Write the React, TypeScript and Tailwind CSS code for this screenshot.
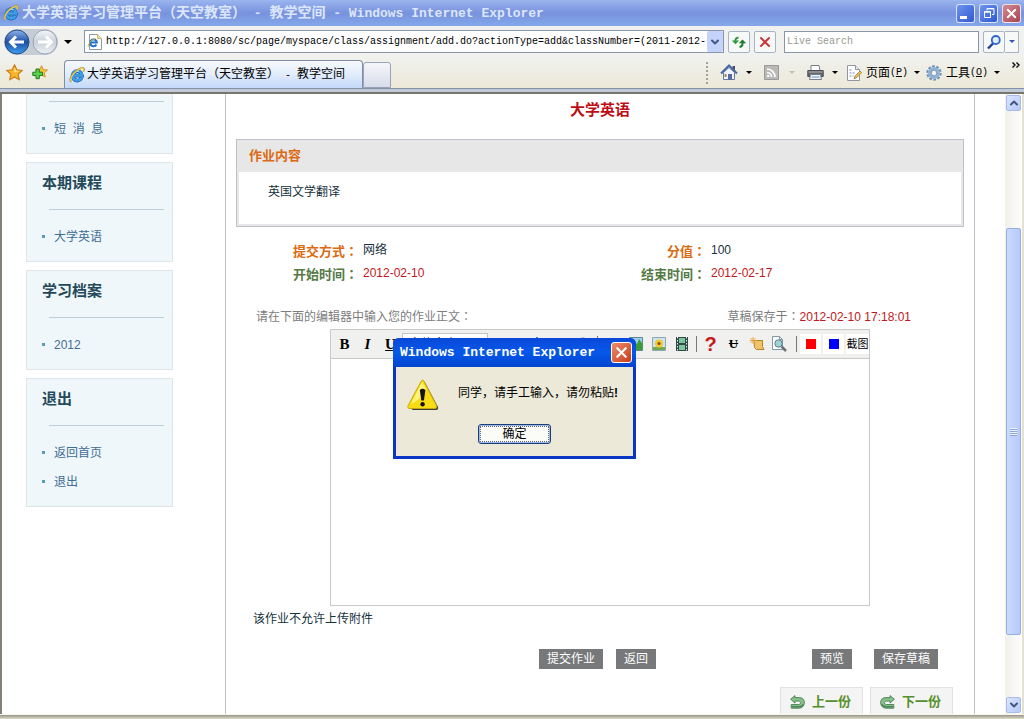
import type { ReactNode } from "react";
import { ChevronDown, ChevronUp, X } from "lucide-react";

const menus = [
  { title: "本期课程", items: ["大学英语"] },
  { title: "学习档案", items: ["2012"] },
  { title: "退出", items: ["返回首页", "退出"] },
];

const fields = [
  { label: "提交方式", value: "网络", tone: "text-[#dc6a12]", valueTone: "text-[#16323c]" },
  { label: "分值", value: "100", tone: "text-[#dc6a12]", valueTone: "text-[#16323c]" },
  { label: "开始时间", value: "2012-02-10", tone: "text-[#557a45]", valueTone: "text-[#c01820]" },
  { label: "结束时间", value: "2012-02-17", tone: "text-[#557a45]", valueTone: "text-[#c01820]" },
];

function IeLogo({ className = "size-4" }: { className?: string }) {
  return (
    <svg viewBox="0 0 16 16" className={`shrink-0 ${className}`} fill="none" aria-hidden="true">
      <path d="M12.6 10.8A4.7 4.7 0 1 1 13 8.600H4.600" stroke="#1b62b4" strokeWidth="3.800" />
      <path d="M12.4 10.8A4.7 4.7 0 1 1 12.900 8.500H4.600" stroke="#3f9fe6" strokeWidth="2.600" />
      <path d="M5 5.600a4.200 4.200 0 0 1 5-1" stroke="#a8dcff" strokeWidth="1" />
      <path d="M2.400 14.800C-.4 13.600 2.200 8 6.600 4.300 10.600 1 14.800-.2 15 2.200c.1.800-.2 1.600-.7 2.400" stroke="#a8903a" strokeWidth="1.600" />
      <path d="M2.600 14.400C.3 13 2.800 8 7 4.400 10.800 1.300 14.400.4 14.500 2.400c0 .6-.2 1.300-.6 2" stroke="#f4cf55" strokeWidth="1.100" />
    </svg>
  );
}

function Caret({ tone = "border-t-black" }: { tone?: string }) {
  return <span className={`size-0 border-x-[3px] border-t-[3px] border-x-transparent ${tone}`} />;
}

// The TC face centres the full-width colon in its cell.
function Colon() {
  return <span className="font-['Noto_Sans_CJK_TC',sans-serif]">：</span>;
}

function NavArrow({ forward = false }: { forward?: boolean }) {
  return (
    <svg viewBox="0 0 26 26" className="size-[26px]" fill="none" aria-hidden="true">
      <defs>
        <linearGradient id={forward ? "fwd" : "back"} x1="0" y1="0" x2="0" y2="1">
          <stop offset="0" stopColor={forward ? "#f4f6f9" : "#8fb4e8"} />
          <stop offset=".5" stopColor={forward ? "#c9d0d9" : "#1d4fa8"} />
          <stop offset="1" stopColor={forward ? "#eef2f5" : "#3fa0ee"} />
        </linearGradient>
      </defs>
      <circle cx="13" cy="13" r="12" fill={`url(#${forward ? "fwd" : "back"})`} stroke={forward ? "#98a4b4" : "#284a80"} />
      <path
        d={forward ? "M6 13h13M14 7.500l5.500 5.500-5.500 5.500" : "M20 13H7M12 7.500L6.500 13l5.500 5.500"}
        stroke="#fff"
        strokeWidth="3"
      />
    </svg>
  );
}

const star = "M8 .8l2.200 4.700 5.100.6-3.800 3.500 1 5.100L8 12.200l-4.500 2.500 1-5.100L.7 6.100l5.100-.6z";

function TitleBar() {
  const box = "flex size-[19px] items-center justify-center rounded-[3px] border border-white/80 text-white";
  return (
    <header className="flex h-[26px] shrink-0 items-center bg-linear-to-b from-[#9ab5ee] via-[#7892de] to-[#84a8ea] pl-[3px] pr-[3px]">
      <IeLogo />
      <h1 className="ml-[3px] flex-1 whitespace-pre font-['Liberation_Mono','Noto_Sans_CJK_SC',monospace] text-[13px] font-bold leading-5 text-[#dce6fb]">
        <span className="text-sm">大学英语学习管理平台（天空教室）</span>
        {" - "}
        <span className="text-sm">教学空间</span>
        {" - Windows Internet Explorer"}
      </h1>
      <div className="flex gap-1">
        <button aria-label="最小化" className={`${box} bg-linear-to-br from-[#6f95ee] to-[#2f57d0]`}>
          <span className="mr-1 mt-2 h-[3px] w-[7px] bg-white" />
        </button>
        <button aria-label="还原" className={`${box} bg-linear-to-br from-[#6f95ee] to-[#2f57d0]`}>
          <svg viewBox="0 0 12 12" className="size-3" fill="none" stroke="#fff" aria-hidden="true">
            <path d="M4 3.500V1.500h7v6H9M4 1.900h7" />
            <path d="M1.500 4.500h6v6h-6zM1.500 5.200h6" />
          </svg>
        </button>
        <button aria-label="关闭" className={`${box} bg-linear-to-br from-[#d08a94] to-[#a84450]`}>
          <X className="size-[15px] shrink-0" strokeWidth={3} />
        </button>
      </div>
    </header>
  );
}

function AddressBar() {
  const small = "flex h-[22px] w-[22px] shrink-0 items-center justify-center rounded-[2px] border border-[#a6b4c4] bg-[#f7f8f8]";
  return (
    <div className="flex h-[31px] shrink-0 items-center bg-[#f1f2f0] pl-1 pr-[5px]">
      <div className="flex items-center gap-0.5 rounded-full bg-[#c6ccd4]">
        <button aria-label="后退">
          <NavArrow />
        </button>
        <button aria-label="前进">
          <NavArrow forward />
        </button>
      </div>
      <button aria-label="历史记录" className="ml-1 flex w-3 justify-center">
        <span className="size-0 border-x-4 border-t-4 border-x-transparent border-t-black" />
      </button>
      <div className="ml-2.5 flex h-[23px] flex-1 items-center border border-[#8796a8] bg-white pl-0.5">
        <svg viewBox="0 0 16 16" className="size-4 shrink-0" fill="none" aria-hidden="true">
          <path d="M2.500.5h8l4 4v11h-12z" fill="#fff" stroke="#8d99a3" />
          <path d="M10.500.5v4h4" fill="#f3e7a8" stroke="#c9b860" />
          <path d="M9.400 10.600a3.400 3.400 0 1 1 .5-2.100H4" stroke="#2273c4" strokeWidth="2" />
          <path d="M1.500 13C0 11.500 4 5.500 8.500 4.500" stroke="#e0b040" />
        </svg>
        <input
          aria-label="地址"
          className="ml-[3px] min-w-0 flex-1 font-['Liberation_Mono',monospace] text-[10px] text-black outline-none"
          defaultValue="http://127.0.0.1:8080/sc/page/myspace/class/assignment/add.do?actionType=add&classNumber=(2011-2012-"
        />
        <button aria-label="展开地址" className="flex h-[21px] w-4 items-center justify-center rounded-[2px] bg-[#c3d3fa] text-[#41588c]">
          <ChevronDown className="size-3" strokeWidth={4} />
        </button>
      </div>
      <button aria-label="刷新" className={`${small} ml-1`}>
        <svg viewBox="0 0 16 16" className="size-4 shrink-0" fill="none" aria-hidden="true">
          <path d="M4.500 7.500V6q0-2 3-2.500" stroke="#2f9a3c" strokeWidth="2" />
          <path d="M.8 6.500h7.400L4.500 10.200z" fill="#2f9a3c" />
          <path d="M11.500 8.500V10q0 2.500-3 3" stroke="#1f7d2e" strokeWidth="2" />
          <path d="M7.800 9.200h7.400L11.500 5.500z" fill="#1f7d2e" />
        </svg>
      </button>
      <button aria-label="停止" className={`${small} ml-1 text-[#c8383c]`}>
        <X className="size-4 shrink-0" strokeWidth={3} />
      </button>
      <input
        aria-label="搜索"
        placeholder="Live Search"
        className="ml-2 h-[22px] w-[195px] border border-[#8796a8] bg-white px-0.5 font-['Liberation_Mono',monospace] text-[10px] outline-none placeholder:text-[#9a9a94]"
      />
      <button aria-label="开始搜索" className={`${small} ml-1`}>
        <svg viewBox="0 0 16 16" className="size-4" fill="none" aria-hidden="true">
          <path d="M7 9.500L2 14.500" stroke="#1c3f9c" strokeWidth="2.400" />
          <circle cx="9.800" cy="6" r="4" fill="#e2eefc" stroke="#3066c8" strokeWidth="1.800" />
        </svg>
      </button>
      <button aria-label="搜索选项" className="flex h-[22px] w-3.5 items-center justify-center border border-l-0 border-[#a6b4c4] bg-[#f7f8f8]">
        <Caret tone="border-t-[#2d5aa8]" />
      </button>
    </div>
  );
}

function CommandBar() {
  return (
    <nav className="flex h-[31px] shrink-0 items-end bg-linear-to-b from-[#f1f1ed] to-[#ece9d8] pl-1.5">
      <div className="flex h-[31px] w-[58px] items-center gap-[9px]">
        <button aria-label="收藏中心">
          <svg viewBox="0 0 16 16" className="size-[17px]" aria-hidden="true">
            <path d={star} fill="#fbb52a" stroke="#c97a12" />
            <path d="M8 2.500L9.400 6l3.400.5L8 8z" fill="#ffe59a" />
          </svg>
        </button>
        <button aria-label="添加到收藏夹">
          <svg viewBox="0 0 16 16" className="size-4" aria-hidden="true">
            <path d={star} fill="#f7c23c" stroke="#c98a22" transform="translate(3 0) scale(.82)" />
            <path d="M4 4h3.300v3.200h3.200v3.300H7.300v3.200H4v-3.200H.8V7.200H4z" fill="#5ad14a" stroke="#1d7c20" />
          </svg>
        </button>
      </div>
      <button className="flex h-7 w-[299px] items-center rounded-t-[4px] border border-b-0 border-[#7d8ea6] bg-linear-to-b from-[#f7fafd] via-[#e2ecfb] to-[#c3d9fa] pl-1 font-['Liberation_Mono','Noto_Sans_CJK_SC',monospace] text-xs text-black">
        <IeLogo />
        <span className="ml-0.5 whitespace-pre">
          大学英语学习管理平台（天空教室）<span className="text-[10px]"> - </span>教学空间
        </span>
      </button>
      <button aria-label="新选项卡" className="h-[26px] w-7 rounded-t-[3px] border border-[#98a3b8] bg-linear-to-b from-[#f5f6fa] to-[#d8dcea]" />
      <div className="ml-auto flex h-[31px] items-center pr-1">
        <span className="h-[22px] border-l-2 border-dotted border-[#a5a294]" />
        <button aria-label="主页" className="ml-3 flex items-center gap-2">
          <svg viewBox="0 0 18 18" className="size-[18px]" aria-hidden="true">
            <path d="M12.500 2h2.500v4h-2.500z" fill="#4a4f66" />
            <path d="M3.500 8.500L9 3.500l5.500 5v7h-11z" fill="#f1f4fa" stroke="#69779c" />
            <path d="M1 9.500L9 1.500l8 8" fill="none" stroke="#4867a8" strokeWidth="2" />
            <path d="M8 10h4v6H8z" fill="#536ca8" />
            <path d="M4.500 10h2v3h-2z" fill="#a8845c" />
          </svg>
          <Caret />
        </button>
        <button aria-label="源" className="ml-3 flex items-center gap-2.5">
          <svg viewBox="0 0 15 15" className="size-[15px]" fill="none" aria-hidden="true">
            <path d="M.5.5h14v14H.5z" fill="#b9b9b5" stroke="#9a9a96" />
            <path d="M3 7.500A4.500 4.500 0 0 1 7.500 12M3 4a8 8 0 0 1 8 8" stroke="#fff" strokeWidth="1.600" />
            <circle cx="4.200" cy="11" r="1.200" fill="#fff" />
          </svg>
          <Caret tone="border-t-[#c4c1b3]" />
        </button>
        <button aria-label="打印" className="ml-3 flex items-center gap-2">
          <svg viewBox="0 0 17 17" className="size-[17px]" aria-hidden="true">
            <path d="M4 1.500h8l1 5H4z" fill="#fff" stroke="#7c7f84" />
            <path d="M.8 6.500h15.400v6H.8z" fill="#62666c" stroke="#484b50" />
            <path d="M1.500 8h14" stroke="#b2b6ba" />
            <path d="M3.500 10.500h10l1 5h-12z" fill="#edf3fb" stroke="#7c7f84" />
            <path d="M4.500 13h8" stroke="#6d92cf" />
          </svg>
          <Caret />
        </button>
        <button className="ml-2 flex items-center text-xs text-black">
          <svg viewBox="0 0 16 16" className="mr-1 size-4" aria-hidden="true">
            <path d="M1.500.5h8l4 4v11h-12z" fill="#fff" stroke="#8f98a2" />
            <path d="M9.500.5v4h4" fill="#e8edf2" stroke="#8f98a2" />
            <path d="M3.500 5h3M3.500 8h5M3.500 11h4" stroke="#7188c8" strokeDasharray="2 1" />
            <path d="M8 14l1-3 5-5 1.700 1.700-5 5z" fill="#e9bf5a" stroke="#8c6f2c" strokeWidth=".7" />
          </svg>
          页面
          <span className="mr-1.5 font-['Liberation_Mono',monospace] text-[10px]">
            (<u>P</u>)
          </span>
          <Caret />
        </button>
        <button className="ml-1.5 flex items-center text-xs text-black">
          <svg viewBox="0 0 16 16" className="mr-1 size-4" fill="none" aria-hidden="true">
            <circle cx="8" cy="8" r="6.600" stroke="#6f8fb4" strokeWidth="2.200" strokeDasharray="2.600 1.550" />
            <circle cx="8" cy="8" r="4.400" fill="#f2f3ee" stroke="#8fb2d8" strokeWidth="3" />
            <circle cx="8" cy="8" r="2.800" stroke="#64809e" strokeWidth=".7" />
          </svg>
          工具
          <span className="mr-1.5 font-['Liberation_Mono',monospace] text-[10px]">
            (<u>O</u>)
          </span>
          <Caret />
        </button>
        <button aria-label="更多命令" className="mb-4 ml-3">
          <svg viewBox="0 0 8 6" className="h-1.5 w-2" fill="none" stroke="#000" strokeWidth="1.300" aria-hidden="true">
            <path d="M.5.500L3 3 .5 5.500M4.500.500L7 3 4.500 5.500" />
          </svg>
        </button>
      </div>
    </nav>
  );
}

function MenuItems({ items }: { items: string[] }) {
  return (
    <>
      <hr className="ml-[22px] mr-2 border-[#bccddc]" />
      <ul className="pb-2.5 pl-[15px] pt-3">
        {items.map((item) => (
          <li key={item} className="flex h-[29px] items-center gap-[9px]">
            <span className="size-[3px] bg-[#569fb4]" />
            <a href="#" className="whitespace-pre text-xs text-[#3f6d94]">
              {item}
            </a>
          </li>
        ))}
      </ul>
    </>
  );
}

function Sidebar() {
  const card = "border border-[#dde5e9] bg-[#eff7fb]";
  return (
    <aside className="ml-6 flex w-[147px] shrink-0 flex-col gap-2">
      <section className={`${card} border-t-0 pt-[7px]`}>
        <MenuItems items={["短  消  息"]} />
      </section>
      {menus.map((menu) => (
        <section key={menu.title} className={card}>
          <h2 className="mb-1.5 flex h-10 items-center pl-[15px] text-[15px] font-bold text-[#24495a]">{menu.title}</h2>
          <MenuItems items={menu.items} />
        </section>
      ))}
    </aside>
  );
}

function Tool({ label, children, className = "text-sm" }: { label: string; children?: ReactNode; className?: string }) {
  return (
    <button aria-label={label} className={`flex w-[23px] shrink-0 items-center justify-center font-bold ${className}`}>
      {children}
    </button>
  );
}

function EditorToolbar() {
  const letter = "h-6 font-['Liberation_Serif',serif] text-[15px] text-black";
  const swatch = "h-5 border-r-2 border-[#f0f0ee] bg-white";
  return (
    <div className="flex h-[29px] items-center overflow-hidden border-b border-[#c9c9c9] bg-[#f0f0ee] pl-0.5">
      <Tool label="粗体" className={letter}>B</Tool>
      <Tool label="斜体" className={`${letter} italic`}>I</Tool>
      <Tool label="下划线" className={`${letter} underline`}>U</Tool>
      <select aria-label="字体大小" className="h-[22px] w-[86px] border border-[#c4c4c4] bg-white px-0.5 text-xs text-black">
        <option>字体大小</option>
      </select>
      <div className="ml-auto flex items-center">
        <Tool label="文字颜色">
          <svg viewBox="0 0 14 14" className="size-3.5" fill="none" aria-hidden="true">
            <path d="M2 11L7 1l5 10M4 8h6" stroke="#2f6fd0" strokeWidth="2" />
          </svg>
        </Tool>
        <Tool label="背景颜色">
          <svg viewBox="0 0 14 14" className="size-3.5" aria-hidden="true">
            <path d="M7 1l5 5-5 5-5-5z" fill="#8fb2e8" stroke="#2f5fb0" />
          </svg>
        </Tool>
        <Tool label="超链接">
          <svg viewBox="0 0 14 14" className="size-3.5" fill="none" aria-hidden="true">
            <circle cx="7" cy="7" r="5.500" stroke="#4a7fd0" strokeWidth="2" />
          </svg>
        </Tool>
        <span className="mx-[3px] h-4 w-px bg-[#777]" />
        <Tool label="附件">
          <svg viewBox="0 0 14 14" className="size-3.5" aria-hidden="true">
            <path d="M7 1l5 5H2z" fill="#555" />
          </svg>
        </Tool>
        <Tool label="插入图片">
          <svg viewBox="0 0 14 14" className="size-3.5" aria-hidden="true">
            <path d="M.5.5h13v13H.5z" fill="#9ed0ee" stroke="#5c8a90" />
            <path d="M1 8l4-4 3 3 2-5 3.500 5v6H1z" fill="#3f9a3a" />
          </svg>
        </Tool>
        <Tool label="插入动画">
          <svg viewBox="0 0 14 14" className="size-3.5" aria-hidden="true">
            <path d="M.5.5h13v13H.5z" fill="#cde4ee" stroke="#8ba9b4" />
            <path d="M1 10h12v3H1z" fill="#79a84c" />
            <circle cx="7" cy="6.500" r="4" fill="#f3c934" />
            <circle cx="7" cy="6.500" r="1.600" fill="#8a5418" />
          </svg>
        </Tool>
        <Tool label="插入视频">
          <svg viewBox="0 0 14 16" className="h-4 w-3.5" aria-hidden="true">
            <path d="M1 1h12v14H1z" fill="#2f4a46" />
            <path d="M4 2h6v5H4zM4 9h6v5H4z" fill="#7fc4a0" />
            <path d="M2.500 1v14M11.500 1v14" stroke="#dce8e4" strokeDasharray="1.500 1.500" />
          </svg>
        </Tool>
        <span className="ml-[3px] mr-0.5 h-4 w-px bg-[#777]" />
        <Tool label="帮助" className="h-6 font-['Liberation_Sans',sans-serif] text-xl text-[#c41c1c]">?</Tool>
        <Tool label="删除线" className="h-6 font-['Liberation_Serif',serif] text-[13px] text-black line-through">U</Tool>
        <Tool label="清除格式">
          <svg viewBox="0 0 16 14" className="h-3.5 w-4" aria-hidden="true">
            <path d="M5 3.500h8.500v6l1.500 3H7.500l-2-2z" fill="#f0c466" stroke="#b5822c" />
            <path d="M4 0v7M.5 3.500h7M1.500 1l5 5M6.500 1l-5 5" stroke="#e5a53c" strokeWidth=".9" />
          </svg>
        </Tool>
        <Tool label="查看">
          <svg viewBox="0 0 17 16" className="h-4 w-[17px]" fill="none" aria-hidden="true">
            <path d="M1.500.5h7l3 3v10h-10z" fill="#fff" stroke="#7f97a8" />
            <path d="M8.500.5v3h3" stroke="#7f97a8" />
            <circle cx="7.500" cy="7.500" r="3.700" fill="#9fd3d0" stroke="#60808c" />
            <path d="M10.500 10.500l4.500 4.500" stroke="#6b7078" strokeWidth="2.500" />
          </svg>
        </Tool>
        <span className="ml-[5px] mr-[3px] h-4 w-px bg-[#777]" />
        <Tool label="红色" className={swatch}>
          <span className="size-2.5 bg-[#f00]" />
        </Tool>
        <Tool label="蓝色" className={swatch}>
          <span className="size-2.5 bg-[#00f]" />
        </Tool>
        <button className="h-5 w-[23px] bg-white text-[11px] leading-5 text-black">截图</button>
      </div>
    </div>
  );
}

function GreyButton({ children }: { children: ReactNode }) {
  return <button className="h-5 bg-[#77787a] px-2 text-xs leading-5 text-white">{children}</button>;
}

function PageLink({ next = false, children }: { next?: boolean; children: ReactNode }) {
  return (
    <a href="#" className="flex h-7 w-[83px] items-center gap-[7px] border border-b-0 border-[#e2e2e2] bg-[#f4f4f4] pl-[9px] text-[13px] font-bold text-[#54902a]">
      <svg viewBox="0 0 15 14" className={`h-3.5 w-[15px] ${next ? "-scale-x-100" : ""}`} aria-hidden="true">
        <path
          d="M.6 4.200L5 .6v2h4.200c3 0 5.200 2 5.200 5s-2.200 5.600-5.200 5.600H1.200V9.500h7.300c1.200 0 2-.7 2-1.700s-.8-1.700-2-1.700H5v2z"
          fill="#86c08a"
          stroke="#4a7f54"
          strokeWidth=".9"
        />
        <path d="M2 11.700h7c2 0 3.600-1 4.200-2.500" fill="none" stroke="#4f8459" strokeWidth="1.400" />
      </svg>
      {children}
    </a>
  );
}

function Assignment() {
  return (
    <main className="ml-[52px] mr-[30px] min-w-0 flex-1 border-x border-[#bdc0c4]">
      <h2 className="mb-[13px] flex h-8 items-center justify-center text-[15px] font-bold text-[#be0d16]">大学英语</h2>

      <section className="mx-2.5 border border-[#bfc2c9] bg-[#e7e7e7] px-0.5 pb-0.5">
        <h3 className="flex h-8 items-center pl-2.5 text-[13px] font-bold text-[#dc6a12]">作业内容</h3>
        <div className="min-h-[52px] bg-white pl-[29px]">
          <p className="text-xs leading-10 text-[#16323c]">英国文学翻译</p>
        </div>
      </section>

      <dl className="mt-3 grid grid-cols-[132fr_216fr_132fr_268fr] leading-[23px]">
        {fields.map((f) => (
          <div key={f.label} className="contents">
            <dt className={`h-[23px] text-right text-[13px] font-bold ${f.tone}`}>
              {f.label}
              <Colon />
            </dt>
            <dd className={`pl-[5px] text-xs leading-[23px] ${f.valueTone}`}>{f.value}</dd>
          </div>
        ))}
      </dl>

      <div className="mt-[22px] flex justify-between pl-[30px] pr-[63px] text-xs leading-[18px] text-[#7d7d7d]">
        <label htmlFor="answer">
          请在下面的编辑器中输入您的作业正文
          <Colon />
        </label>
        <p>
          草稿保存于
          <Colon />
          <span className="text-[#c01820]">2012-02-10 17:18:01</span>
        </p>
      </div>

      <div className="mx-[104px] mt-[3px] border border-[#c9c9c9]">
        <EditorToolbar />
        <textarea id="answer" className="block h-[246px] w-full resize-none p-2 text-xs outline-none" />
      </div>
      <p className="pl-[27px] text-xs leading-[26px] text-[#16323c]">该作业不允许上传附件</p>

      <div className="mt-[17px] flex justify-between pl-[313px] pr-9">
        <div className="flex gap-[13px]">
          <GreyButton>提交作业</GreyButton>
          <GreyButton>返回</GreyButton>
        </div>
        <div className="flex gap-[22px]">
          <GreyButton>预览</GreyButton>
          <GreyButton>保存草稿</GreyButton>
        </div>
      </div>

      <div className="mt-[18px] flex justify-end gap-[7px] pr-[21px]">
        <PageLink>上一份</PageLink>
        <PageLink next>下一份</PageLink>
      </div>
    </main>
  );
}

function ScrollBar() {
  const end = "flex h-4 w-[15px] items-center justify-center rounded-[2px] border border-[#a9bce8] bg-linear-to-br from-[#dbe5fe] to-[#b6c9f7] text-[#42577f]";
  return (
    <div className="flex w-[17px] shrink-0 flex-col items-center bg-linear-to-r from-[#f1f0ea] to-[#fdfdfb] pb-px pt-px">
      <button aria-label="向上滚动" className={end}>
        <ChevronUp className="size-3" strokeWidth={4} />
      </button>
      <div className="flex w-[15px] flex-1 flex-col">
        <div className="flex-[118]" />
        <div className="flex flex-[407] flex-col items-center justify-center gap-px rounded-[2px] border border-[#98aee0] bg-linear-to-r from-[#cbdafd] to-[#b5c9fb]">
          {[0, 1, 2, 3].map((n) => (
            <span key={n} className="h-px w-[7px] bg-[#eef4fe] shadow-[0_1px_0_#8ca6dc]" />
          ))}
        </div>
        <div className="flex-[62]" />
      </div>
      <button aria-label="向下滚动" className={end}>
        <ChevronDown className="size-3" strokeWidth={4} />
      </button>
    </div>
  );
}

function AlertDialog() {
  return (
    <div
      role="alertdialog"
      aria-labelledby="alert-title"
      aria-describedby="alert-text"
      className="absolute left-[393px] top-[338px] w-[243px] rounded-t-[6px] border-[3px] border-t-0 border-[#0a36c4] bg-[#ece9d8]"
    >
      <div className="-mx-[3px] flex h-[29px] items-center rounded-t-[6px] bg-linear-to-b from-[#0a48d8] via-[#0558ea] to-[#0344cf] pl-[7px] pr-1">
        <h2 id="alert-title" className="flex-1 whitespace-nowrap font-['Liberation_Mono',monospace] text-[13px] font-bold text-white">
          Windows Internet Explorer
        </h2>
        <button aria-label="关闭" className="flex size-[21px] items-center justify-center rounded-[3px] border border-white bg-linear-to-br from-[#ec8a68] to-[#c93a14] text-white">
          <X className="size-[17px] shrink-0" strokeWidth={3} />
        </button>
      </div>
      <div className="flex h-[52px] items-center pl-[11px]">
        <svg viewBox="0 0 32 32" className="mt-1 size-8 shrink-0" aria-hidden="true">
          <path d="M17.500 2.500L31 28q.6 3-2 3H5z" fill="#3d3d3a" />
          <path d="M14.200 2.200q1.300-2.400 2.800 0L29.500 26.500q1 3-1.500 3H3q-3 0-1.800-3z" fill="#f8dd14" stroke="#c7a40a" />
          <path d="M15 3L4 25Q15 20 19 10z" fill="#fff37a" />
          <path d="M12.800 11q2.800-2.400 5.600 0l-1.500 10.500h-2.600z" fill="#141414" />
          <circle cx="15.600" cy="25.300" r="2.200" fill="#141414" />
        </svg>
        <p id="alert-text" className="ml-[19px] whitespace-nowrap text-xs text-black">
          同学，请手工输入，请勿粘贴<b>!</b>
        </p>
      </div>
      <div className="flex justify-center pb-3 pt-[5px]">
        <button className="h-5 w-[73px] rounded-[3px] border border-[#1d3d78] bg-[#fbfbf8] p-px text-xs text-black ring-1 ring-inset ring-[#9ab9ec]">
          <span className="block border border-dotted border-[#666] leading-[14px]">确定</span>
        </button>
      </div>
    </div>
  );
}

export default function App() {
  return (
    <div className="relative flex h-screen flex-col overflow-hidden bg-[#ece9d8] font-['Liberation_Sans','Noto_Sans_CJK_SC',sans-serif]">
      <TitleBar />
      <AddressBar />
      <CommandBar />
      <div className="h-1.5 shrink-0 border-b-2 border-t border-b-[#77756e] border-t-[#8392a8] bg-[#c1c8d8]" />
      <div className="flex min-h-0 flex-1 overflow-hidden border-l-2 border-r-2 border-l-[#858177] border-r-[#e4e1d4] bg-white">
        <Sidebar />
        <Assignment />
        <ScrollBar />
      </div>
      <footer className="h-[5px] shrink-0 border-t border-[#f8f6e8] bg-linear-to-b from-[#99968a] to-[#dedbc9]" />
      <AlertDialog />
    </div>
  );
}
